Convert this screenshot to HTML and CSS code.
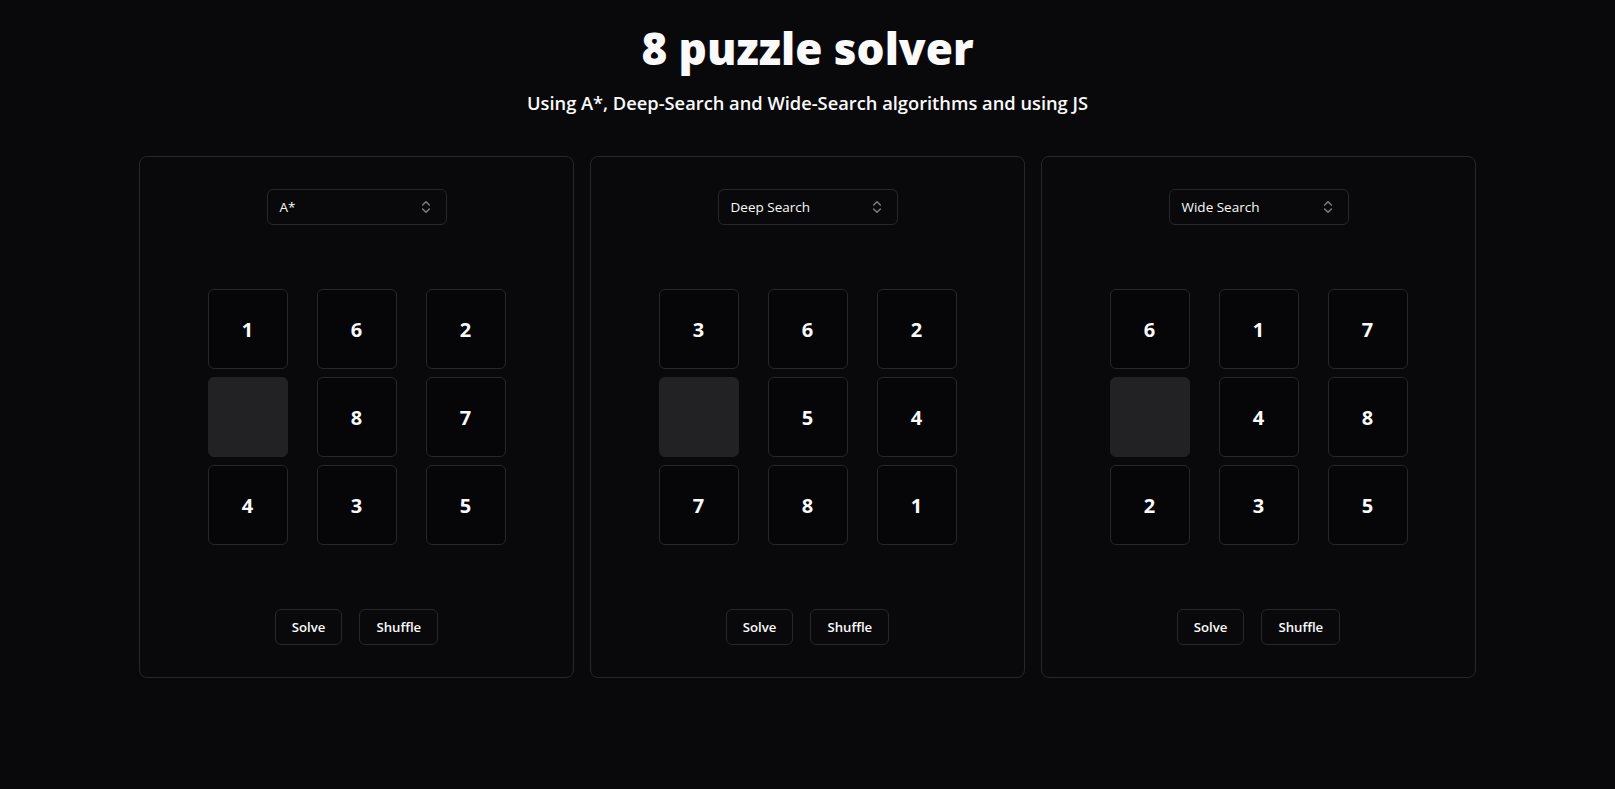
FILE: index.html
```html
<!DOCTYPE html>
<html lang="en">
<head>
<meta charset="utf-8">
<title>8 puzzle solver</title>
<link rel="stylesheet" href="styles.css">
</head>
<body>
<header class="header">
  <h1 class="title">8 puzzle solver</h1>
  <p class="subtitle">Using A*, Deep-Search and Wide-Search algorithms and using JS</p>
</header>
<main class="boards">
  <section class="card">
    <button class="select"><span>A*</span>
      <svg class="chev" viewBox="0 0 24 24" width="16" height="16"><path d="m7 15 5 5 5-5"/><path d="m7 9 5-5 5 5"/></svg>
    </button>
    <div class="grid">
      <div class="tile">1</div><div class="tile">6</div><div class="tile">2</div>
      <div class="tile empty"></div><div class="tile">8</div><div class="tile">7</div>
      <div class="tile">4</div><div class="tile">3</div><div class="tile">5</div>
    </div>
    <div class="actions"><button class="btn">Solve</button><button class="btn">Shuffle</button></div>
  </section>
  <section class="card">
    <button class="select"><span>Deep Search</span>
      <svg class="chev" viewBox="0 0 24 24" width="16" height="16"><path d="m7 15 5 5 5-5"/><path d="m7 9 5-5 5 5"/></svg>
    </button>
    <div class="grid">
      <div class="tile">3</div><div class="tile">6</div><div class="tile">2</div>
      <div class="tile empty"></div><div class="tile">5</div><div class="tile">4</div>
      <div class="tile">7</div><div class="tile">8</div><div class="tile">1</div>
    </div>
    <div class="actions"><button class="btn">Solve</button><button class="btn">Shuffle</button></div>
  </section>
  <section class="card">
    <button class="select"><span>Wide Search</span>
      <svg class="chev" viewBox="0 0 24 24" width="16" height="16"><path d="m7 15 5 5 5-5"/><path d="m7 9 5-5 5 5"/></svg>
    </button>
    <div class="grid">
      <div class="tile">6</div><div class="tile">1</div><div class="tile">7</div>
      <div class="tile empty"></div><div class="tile">4</div><div class="tile">8</div>
      <div class="tile">2</div><div class="tile">3</div><div class="tile">5</div>
    </div>
    <div class="actions"><button class="btn">Solve</button><button class="btn">Shuffle</button></div>
  </section>
</main>
</body>
</html>
```

FILE: styles.css
```css
* { box-sizing: border-box; }
html, body {
  margin: 0;
  background: #09090b;
  color: #fafafa;
  font-family: "Open Sans", "Noto Sans", sans-serif;
}
.header {
  display: flex;
  flex-direction: column;
  align-items: center;
  padding-top: 24px;
}
.title {
  margin: 0;
  font-size: 44px;
  line-height: 48px;
  font-weight: 800;
}
.subtitle {
  margin: 17px 0 0;
  font-size: 18.3px;
  line-height: 28px;
  font-weight: 600;
}
.boards {
  display: grid;
  grid-template-columns: repeat(3, 435px);
  gap: 16px;
  justify-content: center;
  margin-top: 39px;
}
.card {
  border: 1px solid #27272a;
  border-radius: 8px;
  padding: 32px;
  display: flex;
  flex-direction: column;
  align-items: center;
  gap: 64px;
}
.select {
  width: 180px;
  height: 36px;
  display: flex;
  align-items: center;
  justify-content: space-between;
  padding: 0 12px;
  background: transparent;
  border: 1px solid #27272a;
  border-radius: 6px;
  color: #fafafa;
  font-family: inherit;
  font-size: 13.5px;
}
.chev {
  fill: none;
  stroke: #fafafa;
  stroke-width: 2;
  stroke-linecap: round;
  stroke-linejoin: round;
  opacity: 0.5;
}
.grid {
  display: grid;
  grid-template-columns: repeat(3, 80px);
  grid-auto-rows: 80px;
  column-gap: 29px;
  row-gap: 8px;
}
.tile {
  display: flex;
  align-items: center;
  justify-content: center;
  border: 1px solid #27272a;
  border-radius: 6px;
  background: #060608;
  font-size: 20px;
  font-weight: 700;
}
.tile.empty {
  background: #222224;
  border-color: #222224;
}
.actions {
  display: flex;
  gap: 17px;
}
.btn {
  height: 36px;
  padding: 0 16px;
  background: #09090b;
  border: 1px solid #27272a;
  border-radius: 6px;
  color: #fafafa;
  font-family: inherit;
  font-size: 13.2px;
  font-weight: 600;
}
```
